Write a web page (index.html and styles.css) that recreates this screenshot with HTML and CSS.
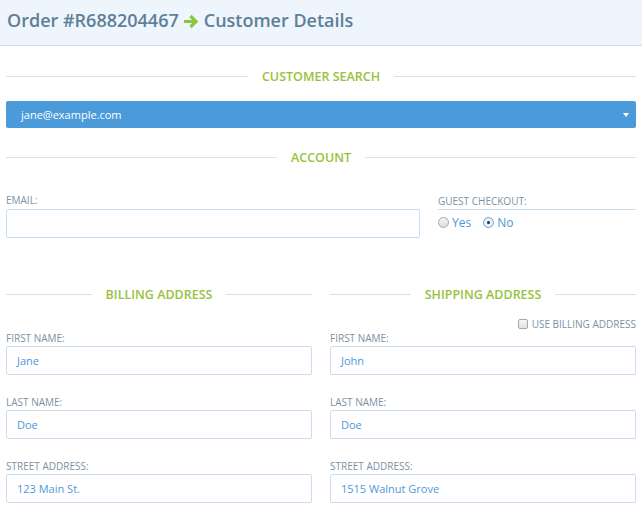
FILE: index.html
```html
<!DOCTYPE html>
<html>
<head>
<meta charset="utf-8">
<link rel="stylesheet" href="styles.css">
</head>
<body>
<header class="header">
  <h1 class="title"><span>Order #R688204467</span><svg class="arrow" width="17" height="15" viewBox="0 0 17 15"><path d="M1 7.5h11M7.5 2l5.5 5.5-5.5 5.5" fill="none" stroke="#8cc63f" stroke-width="3.2"/></svg><span>Customer Details</span></h1>
</header>
<main class="content">
  <div class="section-title search-title">Customer Search</div>
  <div class="select">
    <span>jane@example.com</span>
    <span class="caret"></span>
  </div>
  <div class="section-title account-title">Account</div>
  <div class="account">
    <div class="field email-field">
      <label class="label">Email:</label>
      <div class="input"></div>
    </div>
    <div class="guest">
      <div class="label guest-label">Guest Checkout:</div>
      <div class="radios">
        <span class="radio"></span><span class="radio-text">Yes</span>
        <span class="radio checked"></span><span class="radio-text">No</span>
      </div>
    </div>
  </div>
  <div class="addresses">
    <div class="section-title">Billing Address</div>
    <div class="section-title">Shipping Address</div>
    <div class="use-billing"><span class="checkbox"></span>Use Billing Address</div>
    <div class="field first">
      <label class="label">First Name:</label>
      <div class="input">Jane</div>
    </div>
    <div class="field first">
      <label class="label">First Name:</label>
      <div class="input">John</div>
    </div>
    <div class="field">
      <label class="label">Last Name:</label>
      <div class="input">Doe</div>
    </div>
    <div class="field">
      <label class="label">Last Name:</label>
      <div class="input">Doe</div>
    </div>
    <div class="field">
      <label class="label">Street Address:</label>
      <div class="input">123 Main St.</div>
    </div>
    <div class="field">
      <label class="label">Street Address:</label>
      <div class="input">1515 Walnut Grove</div>
    </div>
  </div>
</main>
</body>
</html>
```

FILE: styles.css
```css
* { box-sizing: border-box; }
body {
  margin: 0;
  font-family: "Open Sans", "Liberation Sans", sans-serif;
  background: #fff;
}
.header {
  height: 46px;
  background: #eef5fc;
  border-bottom: 1px solid #d3e2ef;
  display: flex;
  align-items: center;
  padding-left: 7px;
}
.title {
  margin: -5px 0 0 0;
  font-size: 18px;
  font-weight: 600;
  color: #5f7f98;
  display: flex;
  align-items: center;
  gap: 4px;
  white-space: nowrap;
}
.arrow { margin-top: 2px; }
.content { padding: 0 6px; }
.section-title {
  display: flex;
  align-items: center;
  gap: 14px;
  height: 20px;
  font-size: 12.5px;
  font-weight: 600;
  color: #98c23c;
  text-transform: uppercase;
}
.section-title::before,
.section-title::after {
  content: "";
  flex: 1;
  height: 1px;
  background: #d6e3ee;
}
.search-title { margin-top: 20px; }
.select {
  margin-top: 15px;
  height: 27px;
  background: #4b9bdb;
  border-radius: 2px;
  color: #fff;
  font-size: 11px;
  display: flex;
  align-items: center;
  justify-content: space-between;
  padding: 0 7px 0 15px;
}
.caret {
  width: 0;
  height: 0;
  border-left: 3.5px solid transparent;
  border-right: 3.5px solid transparent;
  border-top: 4px solid #fff;
}
.account-title { margin-top: 19px; }
.account {
  margin-top: 27px;
  display: flex;
  gap: 18px;
}
.email-field { width: 414px; }
.email-field .label { margin-bottom: 3px; }
.guest { flex: 1; }
.label {
  display: block;
  font-size: 10px;
  line-height: 12px;
  height: 12px;
  color: #7b92a4;
  text-transform: uppercase;
  margin-bottom: 2px;
}
.guest-label {
  margin-top: 1px;
  height: 15px;
  border-bottom: 1px solid #c9dcec;
  margin-bottom: 0;
}
.radios {
  display: flex;
  align-items: center;
  height: 25px;
  font-size: 12px;
  color: #4b97d9;
}
.radio {
  width: 11px;
  height: 11px;
  border-radius: 50%;
  border: 1px solid #a8a8a8;
  background: linear-gradient(#f4f4f4, #dedede);
  margin-right: 3px;
  display: inline-flex;
  align-items: center;
  justify-content: center;
}
.radio.checked {
  border-color: #6a9fd0;
  background: #e8f1fa;
  margin-left: 12px;
}
.radio.checked::after {
  content: "";
  width: 3px;
  height: 3px;
  border-radius: 50%;
  background: #1f2f3f;
}
.input {
  height: 29px;
  border: 1px solid #c8def2;
  border-radius: 2px;
  font-size: 11px;
  color: #4e98d8;
  display: flex;
  align-items: center;
  padding-left: 10px;
}
.addresses {
  margin-top: 46px;
  display: grid;
  grid-template-columns: 1fr 1fr;
  column-gap: 18px;
}
.use-billing {
  grid-column: 2;
  margin-top: 14px;
  height: 12px;
  display: flex;
  justify-content: flex-end;
  align-items: center;
  gap: 4px;
  font-size: 10px;
  line-height: 12px;
  color: #7b92a4;
  text-transform: uppercase;
}
.checkbox {
  width: 10px;
  height: 10px;
  border: 1px solid #a8a8a8;
  border-radius: 2px;
  background: linear-gradient(#f6f6f6, #e2e2e2);
}
.field { margin-top: 21px; }
.field.first { margin-top: 2px; }
.email-field { margin-top: 0; }
```
